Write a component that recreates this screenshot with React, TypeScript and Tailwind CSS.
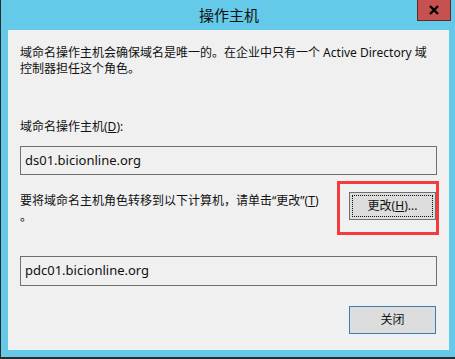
import React from 'react'

const cjk = { fontFamily: '"Noto Sans", "Noto Sans CJK SC", sans-serif' }

export default function App() {
  return (
    <div className="w-[455px] h-[359px] bg-[#65c9e9] border-l border-b-[2px] border-[#2b2b2b] relative overflow-hidden" style={cjk}>
      {/* Title bar */}
      <div className="h-[30px] flex items-center justify-center text-[15px] text-[#111] pl-[2px]">
        操作主机
      </div>
      <div className="absolute top-0 left-[416px] w-[34px] h-[21px] bg-[#c75050] border border-t-0 border-[#5e2a2a] flex items-center justify-center">
        <svg width="12" height="10" viewBox="0 0 12 10">
          <path d="M2 1 L10 9 M10 1 L2 9" stroke="#000" strokeWidth="2.4" />
        </svg>
      </div>

      {/* Body */}
      <div className="ml-[7px] w-[441px] h-[320px] bg-[#f0f0f0] pt-[15px] pl-[12px] text-[12px] leading-[16px] text-[#111]">
        <p>
          域命名操作主机会确保域名是唯一的。在企业中只有一个 Active Directory 域
          <br />
          控制器担任这个角色。
        </p>

        <p className="mt-[42px]">
          域命名操作主机(<span className="underline">D</span>):
        </p>
        <div className="mt-[11px] w-[417px] h-[29px] border border-[#707070] pl-[4px] flex items-center text-[13px] pb-[2px]">
          ds01.bicionline.org
        </div>

        <div className="flex mt-[6px]">
          <p className="w-[317px] pt-[12px]">
            要将域命名主机角色转移到以下计算机，请单击“更改”(<span className="underline">T</span>)
            <br />
            。
          </p>
          <div className="border-[3px] border-[#f23c3c] w-[102px] h-[54px] pl-[9px] pt-[8px]">
            <button className="w-[87px] h-[28px] bg-[#dddddd] border border-[#707070] p-[2px]">
              <div className="w-full h-full border border-dotted border-[#111] flex items-center justify-center text-[12px]">
                更改(<span className="underline">H</span>)...
              </div>
            </button>
          </div>
        </div>

        <div className="mt-[21px] w-[417px] h-[30px] border border-[#707070] pl-[4px] flex items-center text-[13px] pb-[2px]">
          pdc01.bicionline.org
        </div>

        <div className="flex justify-end w-[417px] mt-[20px]">
          <button className="w-[87px] h-[28px] bg-[#dddddd] border border-[#3c7fb1] text-[12px] mr-[1px]">
            关闭
          </button>
        </div>
      </div>
    </div>
  )
}
